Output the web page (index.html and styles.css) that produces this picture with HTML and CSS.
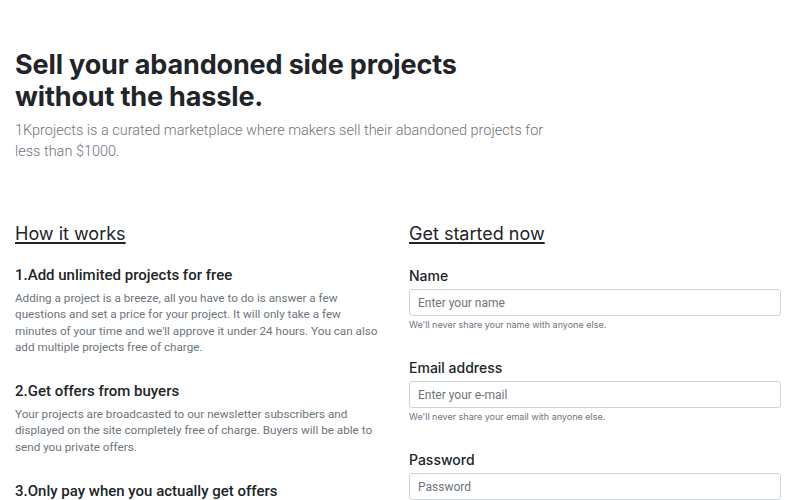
FILE: index.html
```html
<!DOCTYPE html>
<html lang="en">
<head>
<meta charset="utf-8">
<title>1Kprojects</title>
<link rel="stylesheet" href="styles.css">
</head>
<body>
<div class="page">
  <header class="hero">
    <h1 class="hero-title">Sell your abandoned side projects<br>without the hassle.</h1>
    <p class="lead">1Kprojects is a curated marketplace where makers sell their abandoned projects for less than $1000.</p>
  </header>
  <main class="columns">
    <section class="how">
      <h2 class="section-title">How it works</h2>
      <div class="step">
        <h5 class="step-title">1.Add unlimited projects for free</h5>
        <p class="step-text">Adding a project is a breeze, all you have to do is answer a few questions and set a price for your project. It will only take a few minutes of your time and we'll approve it under 24 hours. You can also add multiple projects free of charge.</p>
      </div>
      <div class="step">
        <h5 class="step-title">2.Get offers from buyers</h5>
        <p class="step-text">Your projects are broadcasted to our newsletter subscribers and displayed on the site completely free of charge. Buyers will be able to send you private offers.</p>
      </div>
      <div class="step">
        <h5 class="step-title">3.Only pay when you actually get offers</h5>
        <p class="step-text">You only pay a small fee once you accept an offer from a buyer.</p>
      </div>
    </section>
    <section class="signup">
      <h2 class="section-title">Get started now</h2>
      <form class="form">
        <div class="form-group">
          <label class="label" for="name">Name</label>
          <input class="input" id="name" type="text" placeholder="Enter your name">
          <small class="help">We'll never share your name with anyone else.</small>
        </div>
        <div class="form-group">
          <label class="label" for="email">Email address</label>
          <input class="input" id="email" type="email" placeholder="Enter your e-mail">
          <small class="help">We'll never share your email with anyone else.</small>
        </div>
        <div class="form-group">
          <label class="label" for="password">Password</label>
          <input class="input" id="password" type="password" placeholder="Password">
        </div>
      </form>
    </section>
  </main>
</div>
</body>
</html>
```

FILE: styles.css
```css
* { box-sizing: border-box; }
html, body { margin: 0; padding: 0; background: #fff; }
body {
  font-family: Inter, "Liberation Sans", sans-serif;
  color: #212529;
  overflow: hidden;
}
.page { padding: 49px 15px 0 15px; }
.hero-title {
  margin: 0;
  font-size: 27px;
  line-height: 32px;
  font-weight: 700;
  letter-spacing: -0.15px;
  color: #212529;
}
.lead {
  margin: 7px 0 0 0;
  font-family: Roboto, "Liberation Sans", sans-serif;
  font-size: 14.5px;
  line-height: 21px;
  font-weight: 300;
  color: #6c757d;
  max-width: 545px;
}
.columns {
  display: grid;
  grid-template-columns: 370px 372px;
  column-gap: 24px;
  margin-top: 60px;
}
.section-title {
  margin: 0 0 20px 0;
  font-size: 18px;
  line-height: 24px;
  font-weight: 400;
  text-decoration: underline;
  text-decoration-thickness: 1.5px;
  text-underline-offset: 2px;
  color: #212529;
}
.step { margin-bottom: 27px; }
.step-title {
  margin: 0 0 5px 0;
  font-family: Roboto, "Liberation Sans", sans-serif;
  font-size: 15px;
  line-height: 19px;
  font-weight: 500;
  color: #212529;
}
.step-text {
  margin: 0;
  font-family: Roboto, "Liberation Sans", sans-serif;
  font-size: 11.7px;
  line-height: 16.3px;
  color: #6c757d;
}
.form-group { margin-bottom: 27px; }
.label {
  display: block;
  font-size: 14px;
  line-height: 19px;
  font-weight: 500;
  margin-bottom: 4px;
}
.input {
  display: block;
  width: 100%;
  height: 27px;
  padding: 0 8px;
  font-family: Roboto, "Liberation Sans", sans-serif;
  font-size: 12px;
  color: #495057;
  border: 1px solid #ced4da;
  border-radius: 3px;
  background: #fff;
}
.input::placeholder { color: #6c757d; }
.help {
  display: block;
  margin-top: 3px;
  font-size: 9px;
  line-height: 12px;
  color: #6c757d;
}
```
